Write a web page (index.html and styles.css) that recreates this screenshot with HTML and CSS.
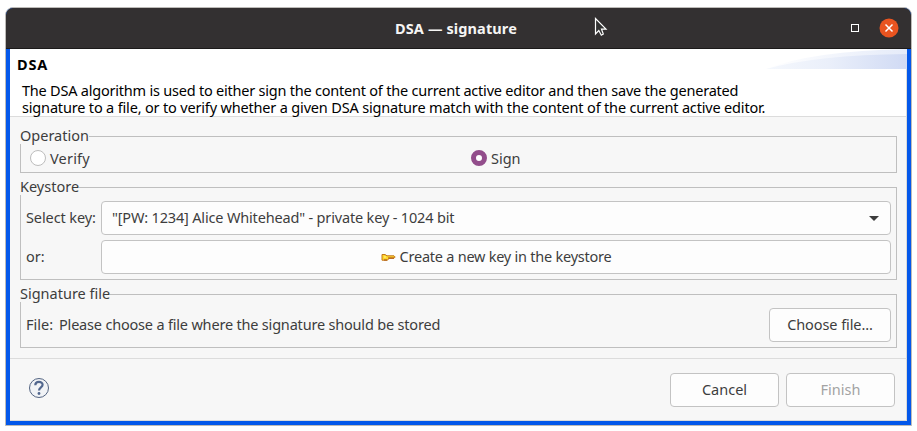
FILE: index.html
```
<!DOCTYPE html>
<html lang="en">
<head>
<meta charset="utf-8">
<title>DSA — signature</title>
<link rel="stylesheet" href="styles.css">
</head>
<body>
<div class="window">
  <header class="titlebar">
    <h1 class="title">DSA — signature</h1>
    <svg class="pointer" width="14" height="20" viewBox="0 0 14 20"><path d="M1.5 1.5V17L4.8 13.5L7.3 18.2L9.3 17L7.5 12.2H12Z" fill="#333" stroke="#fff" stroke-width="1.2"/></svg>
    <span class="controls">
      <span class="maximize"></span>
      <svg class="close" width="20" height="20" viewBox="0 0 20 20"><circle cx="10" cy="10" r="9.5" fill="#e95420"/><path d="M6.5 6.5l7 7m0-7l-7 7" stroke="#fff" stroke-width="1.5"/></svg>
    </span>
  </header>
  <main class="content">
    <section class="banner">
      <h2 class="heading">DSA</h2>
      <p class="description"><span class="line1">The DSA algorithm is used to either sign the content of the current active editor and then save the generated</span> <span class="line2">signature to a file, or to verify whether a given DSA signature match with the content of the current active editor.</span></p>
      <svg class="swoosh" width="141" height="20" viewBox="0 0 141 20">
        <defs><linearGradient id="sky"><stop offset="0" stop-color="#f5f8fd"/><stop offset=".45" stop-color="#eaeffa"/><stop offset="1" stop-color="#d0daf4"/></linearGradient>
        <linearGradient id="glow"><stop offset="0" stop-color="#fff"/><stop offset="1" stop-color="#e5ebf9"/></linearGradient></defs>
        <path d="M0 20Q45 2 141 0V20Z" fill="url(#glow)"/><path d="M0 20Q50 6 141 5V20Z" fill="url(#sky)"/>
      </svg>
    </section>
    <section class="groups">
      <div class="group operation">
        <span class="legend leg-operation">Operation</span>
        <label class="choice"><span class="radio"></span><span class="t-verify">Verify</span></label>
        <label class="choice"><span class="radio checked"></span><span class="t-sign">Sign</span></label>
      </div>
      <div class="group keystore">
        <span class="legend leg-keystore">Keystore</span>
        <span class="t-select">Select key:</span>
        <div class="field select"><span class="t-key">"[PW: 1234] Alice Whitehead" - private key - 1024 bit</span><svg width="10" height="5" viewBox="0 0 10 5"><path d="M0 0h10L5 5Z" fill="#3d3d3d"/></svg></div>
        <span class="t-or">or:</span>
        <div class="field create"><svg width="15" height="9" viewBox="0 0 15 9"><path d="M1 1.5H4L6 2.8H13L14.2 4L13 5.3H8L6.5 7.2H1Z" fill="#ffd82b" stroke="#c3791c"/><path d="M7 5H13M3 7H6" stroke="#a84d17"/><path d="M3 4H5" stroke="#fff2a0"/></svg><span class="t-create">Create a new key in the keystore</span></div>
      </div>
      <div class="group signature">
        <span class="legend leg-signature">Signature file</span>
        <span class="t-file">File:</span>
        <span class="t-please">Please choose a file where the signature should be stored</span>
        <div class="field choose"><span class="t-choose">Choose file...</span></div>
      </div>
    </section>
    <footer class="footer">
      <svg class="help" width="22" height="22" viewBox="0 0 22 22"><circle cx="11" cy="11" r="9.5" fill="#f1f3f6" stroke="#536482"/><path d="M7.3 8.2C7.3 3.9 14.6 3.9 14.6 7.8C14.6 10.4 11 10.2 11 13.5" fill="none" stroke="#52678e" stroke-width="2.2"/><circle cx="11" cy="16.5" r="1.4" fill="#52678e"/></svg>
      <div class="field action"><span class="t-cancel">Cancel</span></div>
      <div class="field action disabled"><span class="t-finish">Finish</span></div>
    </footer>
  </main>
</div>
</body>
</html>
```
FILE: styles.css
```
* { box-sizing: border-box; }
body { margin: 0; padding: 7px 5px; background: #fff; font: 14.5px/18px "Noto Sans", sans-serif; color: #3d3d3d; white-space: nowrap; }
.window { width: 907px; height: 419px; border: 1px solid #bdbbb8; border-radius: 8px 8px 0 0; background: #0458ea; overflow: hidden; display: flex; flex-direction: column; }
.titlebar { height: 41px; flex: none; background: #333031; border-bottom: 1px solid #1c1a1a; display: grid; grid-template-columns: 1fr auto 1fr; align-items: center; position: relative; }
.title { grid-column: 2; margin: 0 5px 0 0; font-size: 14.5px; line-height: 18px; font-weight: 700; letter-spacing: .12px; color: #f6f5f4; }
.pointer { position: absolute; left: 588px; top: 9px; }
.controls { display: flex; align-items: center; justify-content: flex-end; gap: 20px; padding-right: 12px; }
.maximize { width: 8px; height: 8px; border: 1px solid #fff; }
.content { flex: 1; margin: 0 4px 4px; background: #f7f7f7; display: flex; flex-direction: column; box-shadow: inset -1px -1px #dadada; }
.banner { height: 68px; flex: none; background: #fff; border-bottom: 1px solid #dcdcdc; padding: 6px 0 0 7px; margin-right: 1px; color: #000; position: relative; }
.heading { margin: 0; font-size: 14.5px; line-height: 18px; font-weight: 700; letter-spacing: .8px; }
.description { margin: 9px 0 0 5px; line-height: 17px; }
.description span { display: block; }
.line1 { letter-spacing: -.22px; }
.line2 { letter-spacing: -.17px; }
.swoosh { position: absolute; right: -1px; top: 0; }
.groups { height: 242px; flex: none; padding: 19px 10px 0; border-bottom: 1px solid #dcdcdc; display: flex; flex-direction: column; }
.group { position: relative; border: 1px solid #bfbfbf; }
.legend { position: absolute; left: -1px; top: -11px; background: #f7f7f7; }
.operation { height: 37px; display: grid; grid-template-columns: 441px 1fr; padding: 12px 0 0 9px; }
.choice { display: flex; align-items: flex-start; gap: 4px; }
.t-verify { letter-spacing: .2px; }
.radio { width: 16px; height: 16px; border: 1px solid #bdbdbd; border-radius: 50%; background: #fff; margin-top: 1px; }
.radio.checked { border: 5px solid #924d8b; }
.keystore { height: 93px; margin-top: 14px; padding: 13px 5px 0; display: grid; grid-template-columns: 75px 1fr; grid-auto-rows: 34px; row-gap: 5px; align-items: center; }
.keystore > span:not(.legend) { padding-bottom: 2px; }
.t-select { letter-spacing: -.1px; }
.t-key { letter-spacing: -.17px; }
.field { height: 34px; background: #fdfdfd; border: 1px solid #c3c3c3; border-radius: 4px; display: flex; align-items: center; justify-content: center; }
.field > span { padding-bottom: 2px; }
.select { justify-content: space-between; padding: 0 11px 0 10px; }
.create { gap: 4px; }
.t-create { letter-spacing: -.24px; }
.signature { height: 54px; margin-top: 14px; padding: 13px 5px 0; display: flex; align-items: flex-start; }
.signature > span:not(.legend) { margin-top: 7px; }
.t-file { width: 33px; }
.t-please { letter-spacing: -.19px; }
.choose { width: 122px; margin-left: auto; }
.t-choose { letter-spacing: -.08px; }
.footer { display: flex; padding: 14px 12px 0 18px; gap: 7px; }
.help { margin-right: auto; margin-top: 4px; }
.action { width: 109px; }
.disabled { color: #a3a3a3; }
```
